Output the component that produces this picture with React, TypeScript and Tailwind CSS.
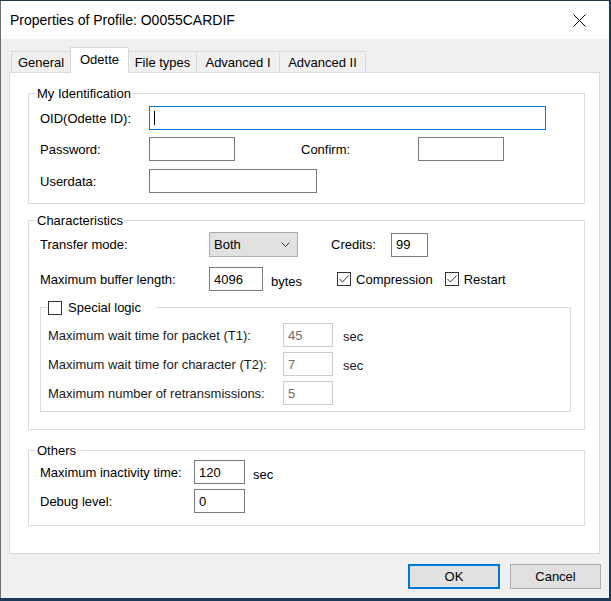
import React from 'react';

const Box = ({ w, value, disabled, focused, caret }: { w: string; value?: string; disabled?: boolean; focused?: boolean; caret?: boolean }) => (
  <div
    className={`${w} h-[24px] flex items-center pl-[4px] bg-white border ${
      focused ? 'border-[#0078d7]' : disabled ? 'border-[#cccccc] text-[#6d6d6d]' : 'border-[#7a7a7a]'
    }`}
  >
    {caret && <div className="w-[1px] h-[14px] bg-black" />}
    {value}
  </div>
);

const Check = ({ checked }: { checked?: boolean }) => (
  <div className="w-[14px] h-[14px] border border-[#333333] bg-white flex items-center justify-center">
    {checked && (
      <svg width="12" height="12" viewBox="0 0 12 12">
        <polyline points="1.5,6 4.5,9 10.5,2.5" fill="none" stroke="#333333" strokeWidth="1" />
      </svg>
    )}
  </div>
);

const Row = ({ label, lw, children, className = '' }: { label: string; lw: string; children: React.ReactNode; className?: string }) => (
  <div className={`flex items-center h-[24px] ${className}`}>
    <div className={lw}>{label}</div>
    {children}
  </div>
);

export default function App() {
  const tabs = [
    { name: 'General', w: 'w-[60px]' },
    { name: 'Odette', w: 'w-[59px]', active: true },
    { name: 'File types', w: 'w-[69px]' },
    { name: 'Advanced I', w: 'w-[84px]' },
    { name: 'Advanced II', w: 'w-[87px]' },
  ];

  return (
    <div className="w-[611px] h-[601px] bg-[#1b3a58] pt-[1px] font-['Liberation_Sans',Arial,sans-serif] text-[13px] text-black leading-[15px]">
      <div className="w-[609px] h-[597px] bg-[#f0f0f0] border-l border-[#6e6e6e] flex flex-col">
        {/* title bar */}
        <div className="h-[38px] bg-white flex items-center pl-[9px] pr-[7px] text-[14px]">
          <span className="flex-1">Properties of Profile: O0055CARDIF</span>
          <div className="w-[46px] h-[38px] flex items-center justify-center">
            <svg width="13" height="13" viewBox="0 0 13 13">
              <path d="M0.5 0.5 L12.5 12.5 M12.5 0.5 L0.5 12.5" stroke="#000" strokeWidth="1" />
            </svg>
          </div>
        </div>

        {/* tabs */}
        <div className="h-[33px] flex items-end pl-[11px]">
          {tabs.map((t) =>
            t.active ? (
              <div
                key={t.name}
                className={`${t.w} -ml-px relative z-10 -mb-px h-[26px] bg-white border border-b-0 border-[#d9d9d9] flex items-center justify-center pb-[2px]`}
              >
                {t.name}
              </div>
            ) : (
              <div
                key={t.name}
                className={`${t.w} -ml-px h-[21px] bg-[#f0f0f0] border border-b-0 border-[#d9d9d9] flex items-center justify-center`}
              >
                {t.name}
              </div>
            )
          )}
        </div>

        {/* tab panel */}
        <div className="ml-[8px] w-[591px] h-[482px] bg-white border border-[#d9d9d9] pl-[18px]">
          <fieldset className="mt-[13px] w-[557px] border border-[#dcdcdc]">
            <legend className="ml-[7px] px-[1px]">My Identification</legend>
            <div className="pl-[11px] pt-[5px] pb-[10px]">
              <Row label="OID(Odette ID):" lw="w-[109px]">
                <Box w="w-[397px]" focused caret />
              </Row>
              <Row label="Password:" lw="w-[109px]" className="mt-[7px]">
                <Box w="w-[86px]" />
                <div className="ml-[66px] w-[117px]">Confirm:</div>
                <Box w="w-[86px]" />
              </Row>
              <Row label="Userdata:" lw="w-[109px]" className="mt-[8px]">
                <Box w="w-[168px]" />
              </Row>
            </div>
          </fieldset>

          <fieldset className="mt-[9px] w-[557px] border border-[#dcdcdc]">
            <legend className="ml-[7px] px-[1px]">Characteristics</legend>
            <div className="pl-[11px] pt-[4px] pb-[17px]">
              <div className="flex items-center h-[25px]">
                <div className="w-[169px]">Transfer mode:</div>
                <div className="w-[89px] h-[25px] bg-[#e1e1e1] border border-[#adadad] flex items-center pl-[4px] pr-[7px]">
                  <span className="flex-1">Both</span>
                  <svg width="9" height="6" viewBox="0 0 9 6">
                    <polyline points="0.5,0.5 4.5,4.5 8.5,0.5" fill="none" stroke="#333" strokeWidth="1" />
                  </svg>
                </div>
                <div className="ml-[33px] w-[60px]">Credits:</div>
                <Box w="w-[37px]" value="99" />
              </div>
              <Row label="Maximum buffer length:" lw="w-[169px]" className="mt-[10px]">
                <Box w="w-[54px]" value="4096" />
                <span className="ml-[8px] mt-[5px]">bytes</span>
                <div className="ml-[35px]">
                  <Check checked />
                </div>
                <span className="ml-[5px]">Compression</span>
                <div className="ml-[12px]">
                  <Check checked />
                </div>
                <span className="ml-[5px]">Restart</span>
              </Row>

              <fieldset className="mt-[9px] w-[531px] border border-[#dcdcdc]">
                <legend className="ml-[6px] pl-[1px] pr-[15px] flex items-center gap-[6px]">
                  <Check />
                  <span>Special logic</span>
                </legend>
                <div className="pl-[7px] pt-[8px] pb-[6px] text-[#1a1a1a]">
                  <Row label="Maximum wait time for packet (T1):" lw="w-[235px]">
                    <Box w="w-[50px]" value="45" disabled />
                    <span className="ml-[10px] mt-[3px]">sec</span>
                  </Row>
                  <Row label="Maximum wait time for character (T2):" lw="w-[235px]" className="mt-[5px]">
                    <Box w="w-[50px]" value="7" disabled />
                    <span className="ml-[10px] mt-[3px]">sec</span>
                  </Row>
                  <Row label="Maximum number of retransmissions:" lw="w-[235px]" className="mt-[5px]">
                    <Box w="w-[50px]" value="5" disabled />
                  </Row>
                </div>
              </fieldset>
            </div>
          </fieldset>

          <fieldset className="mt-[13px] w-[557px] border border-[#dcdcdc]">
            <legend className="ml-[7px] px-[1px]">Others</legend>
            <div className="pl-[11px] pt-[2px] pb-[12px]">
              <Row label="Maximum inactivity time:" lw="w-[154px]">
                <Box w="w-[51px]" value="120" />
                <span className="ml-[8px] mt-[5px]">sec</span>
              </Row>
              <Row label="Debug level:" lw="w-[154px]" className="mt-[5px]">
                <Box w="w-[51px]" value="0" />
              </Row>
            </div>
          </fieldset>
        </div>

        {/* buttons */}
        <div className="mt-[10px] flex justify-end gap-[10px] pr-[8px]">
          <button className="w-[92px] h-[25px] bg-[#e1e1e1] border-2 border-[#0078d7] flex items-center justify-center">
            OK
          </button>
          <button className="w-[91px] h-[25px] bg-[#e1e1e1] border border-[#adadad] flex items-center justify-center">
            Cancel
          </button>
        </div>
      </div>
    </div>
  );
}
